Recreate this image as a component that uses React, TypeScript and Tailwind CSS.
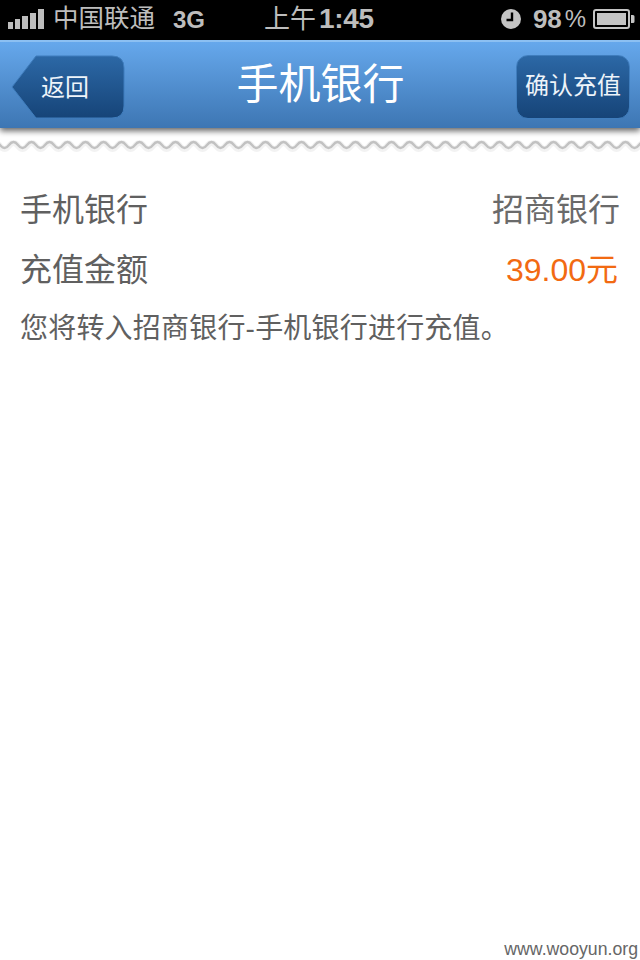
const FONT = "font-['Liberation_Sans','Noto_Sans_CJK_SC',sans-serif]";

function Signal() {
  return (
    <div className="flex items-end gap-[2px]">
      <div className="w-[5px] h-[7px] bg-[#bdbdbd]" />
      <div className="w-[5px] h-[10px] bg-[#bdbdbd]" />
      <div className="w-[6px] h-[13px] bg-[#bdbdbd]" />
      <div className="w-[6px] h-[16px] bg-[#bdbdbd]" />
      <div className="w-[6px] h-[20px] bg-[#bdbdbd]" />
    </div>
  );
}

function StatusBar() {
  return (
    <div className="h-10 bg-black flex items-center text-[#bdbdbd]">
      <div className="ml-[8px] mb-[2px]">
        <Signal />
      </div>
      <span className="ml-[9px] text-[25.5px] leading-none -mt-[2px]">中国联通</span>
      <span className="ml-[18px] text-[24px] leading-none font-bold -mt-[1px]">3G</span>
      <span className="ml-[59px] text-[26px] leading-none -mt-[2px]">上午</span>
      <span className="ml-[3px] text-[28px] leading-none font-bold -mt-[2px] tracking-[-0.3px]">1:45</span>
      <svg className="ml-[126px] -mt-[2px]" width="22" height="22" viewBox="0 0 22 22">
        <circle cx="11" cy="11" r="10" fill="#c4c4c4" />
        <path d="M12 4.5 V12 H6.5" fill="none" stroke="#000" strokeWidth="2.4" />
      </svg>
      <span className="ml-[11px] text-[26px] leading-none font-bold -mt-[2px]">98</span>
      <span className="ml-[3px] text-[24px] leading-none -mt-[2px]">%</span>
      <svg className="ml-[7px] -mt-[2px]" width="42" height="20" viewBox="0 0 42 20">
        <rect x="1" y="1" width="35" height="18" rx="2" fill="none" stroke="#c4c4c4" strokeWidth="2" />
        <rect x="4" y="4" width="29" height="12" fill="#c4c4c4" />
        <path d="M38 6 h2 a1.5 1.5 0 0 1 1.5 1.5 v5 a1.5 1.5 0 0 1 -1.5 1.5 h-2 z" fill="#c4c4c4" />
      </svg>
    </div>
  );
}

function BackButton() {
  return (
    <div className="relative w-[114px] h-[64px] flex items-center pl-[30px]">
      <svg className="absolute inset-0" width="114" height="64" viewBox="0 0 114 64">
        <defs>
          <linearGradient id="backFill" x1="0" y1="0" x2="0" y2="1">
            <stop offset="0" stopColor="#2c68a6" />
            <stop offset="1" stopColor="#164478" />
          </linearGradient>
        </defs>
        <path
          d="M1 32 L25 1 H101 Q113 1 113 13 V51 Q113 63 101 63 H25 Z"
          fill="url(#backFill)"
          stroke="#3f7dbd"
          strokeWidth="1"
        />
      </svg>
      <span className="relative text-[24px] leading-none text-[#eef4fa] mt-[2px]">返回</span>
    </div>
  );
}

function NavBar() {
  return (
    <div className="h-[88px] border-t-2 border-[#8cc0f2] bg-gradient-to-b from-[#66a8ec] to-[#3d76b3] flex items-center justify-between pt-[3px] pl-[11px] pr-[10px] shadow-[0_3px_6px_rgba(0,0,0,0.6)] relative">
      <BackButton />
      <span className="text-[42px] leading-none text-white -mt-[3px]">手机银行</span>
      <div className="w-[114px] h-[64px] rounded-[12px] bg-gradient-to-b from-[#2c68a6] to-[#164478] border border-[#3f7dbd] flex items-center justify-center">
        <span className="text-[24px] leading-none text-[#eef4fa] whitespace-nowrap -mt-[1px]">确认充值</span>
      </div>
    </div>
  );
}

// scalloped paper edge under the nav
function Wave() {
  let d = "M-9 7";
  for (let x = -9; x < 640; x += 18) {
    d += " q4.5 -6 9 0 q4.5 6 9 0";
  }
  return (
    <svg className="block mt-[10px]" width="640" height="14" viewBox="0 0 640 14">
      <path d={d} fill="none" stroke="#000" strokeOpacity="0.05" strokeWidth="6" transform="translate(0 1)" />
      <path d={d} fill="none" stroke="#c2c2c2" strokeWidth="2.4" />
    </svg>
  );
}

export default function App() {
  return (
    <div className={`w-[640px] h-[960px] bg-white flex flex-col overflow-hidden ${FONT}`}>
      <StatusBar />
      <NavBar />
      <Wave />
      <div className="flex-1 flex flex-col pl-[20px] pr-[20px] pt-[28px] text-[#606060]">
        <div className="flex justify-between items-center h-[60px] text-[32px] leading-none">
          <span>手机银行</span>
          <span className="text-[#6a6a6a]">招商银行</span>
        </div>
        <div className="flex justify-between items-center h-[60px] text-[32px] leading-none">
          <span>充值金额</span>
          <span className="text-[#f26a12] mr-[2px]">39.00元</span>
        </div>
        <p className="text-[28px] leading-none mt-[15px] tracking-[0.2px]">您将转入招商银行-手机银行进行充值。</p>
      </div>
      <div className="text-right text-[17.7px] leading-none text-[#666666] pr-[2px] pb-[1px]">www.wooyun.org</div>
    </div>
  );
}
